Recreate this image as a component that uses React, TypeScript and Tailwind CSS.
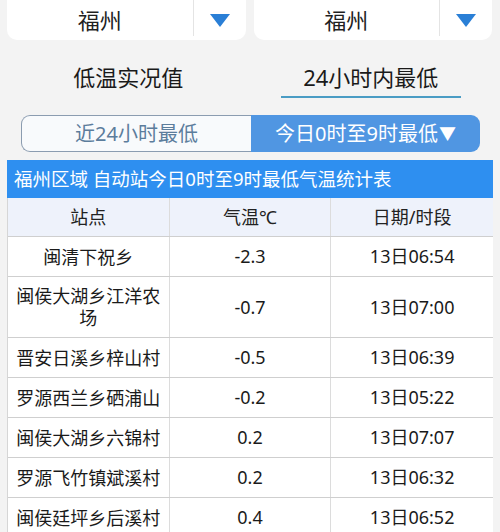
import React from "react";

const rows: [string, string, string][] = [
  ["闽清下祝乡", "-2.3", "13日06:54"],
  ["闽侯大湖乡江洋农场", "-0.7", "13日07:00"],
  ["晋安日溪乡梓山村", "-0.5", "13日06:39"],
  ["罗源西兰乡硒浦山", "-0.2", "13日05:22"],
  ["闽侯大湖乡六锦村", "0.2", "13日07:07"],
  ["罗源飞竹镇斌溪村", "0.2", "13日06:32"],
  ["闽侯廷坪乡后溪村", "0.4", "13日06:52"],
];

const font = { fontFamily: '"Noto Sans", "Noto Sans CJK SC", sans-serif' };

function Select() {
  return (
    <div className="flex-1 h-[40px] bg-white rounded-b-[10px] flex items-center">
      <div className="flex-1 text-center text-[22px] text-[#1f1f1f] leading-none">福州</div>
      <div className="w-px h-[36px] self-start bg-[#e4e4e4]" />
      <div className="w-[52px] flex justify-center">
        <svg width="20" height="13" viewBox="0 0 20 13">
          <polygon points="0,0 20,0 10,13" fill="#2a7fd6" />
        </svg>
      </div>
    </div>
  );
}

export default function App() {
  return (
    <div className="w-[500px] h-[532px] overflow-hidden bg-[#f3f3f3]" style={font}>
      <div className="flex gap-[8px] px-[7px] pr-[8px]">
        <Select />
        <Select />
      </div>
      <div className="flex px-[7px] pr-[8px] pt-[22px] items-start">
        <div className="flex-1 text-center text-[22px] leading-[30px] text-[#1a1a1a]">低温实况值</div>
        <div className="flex-1 flex justify-center">
          <div className="w-[180px] text-center text-[22px] leading-[30px] text-[#1a1a1a] border-b-2 border-[#4a9cc4] pb-[4px]">
            24小时内最低
          </div>
        </div>
      </div>
      <div className="flex px-[21px] pr-[20px] mt-[17px] h-[37px]">
        <div className="flex-1 border border-[#8b9cb0] border-r-0 rounded-l-[9px] bg-[#f8fafc] flex items-center justify-center text-[20px] text-[#5c7d9c]">
          近24小时最低
        </div>
        <div className="flex-1 bg-[#5096e2] rounded-r-[9px] flex items-center justify-center text-[20px] text-white">
          今日0时至9时最低<span className="text-[17px] ml-[1px]">▼</span>
        </div>
      </div>
      <div className="mx-[7px] mt-[8px] h-[38px] bg-[#2e8ff0] text-white text-[18.5px] flex items-center pl-[7px] whitespace-nowrap">
        福州区域 自动站今日0时至9时最低气温统计表
      </div>
      <div className="mx-[7px] border-l border-[#d6d6d6]">
        <div className="grid grid-cols-3 bg-[#eef2fb] h-[39px] border-b border-[#cfcfcf] text-[18px] text-[#222]">
          <div className="flex items-center justify-center border-r border-[#dcdcdc]">站点</div>
          <div className="flex items-center justify-center border-r border-[#dcdcdc]">气温℃</div>
          <div className="flex items-center justify-center">日期/时段</div>
        </div>
        {rows.map(([s, t, d], i) => (
          <div key={i} className="grid grid-cols-3 bg-white min-h-[40px] border-b border-[#cfcfcf] text-[18px] text-[#1a1a1a]">
            <div className="flex items-center justify-center text-center px-[7px] leading-[22px] py-[8px] border-r border-[#dcdcdc]">{s}</div>
            <div className="flex items-center justify-center border-r border-[#dcdcdc]">{t}</div>
            <div className="flex items-center justify-center">{d}</div>
          </div>
        ))}
      </div>
    </div>
  );
}
